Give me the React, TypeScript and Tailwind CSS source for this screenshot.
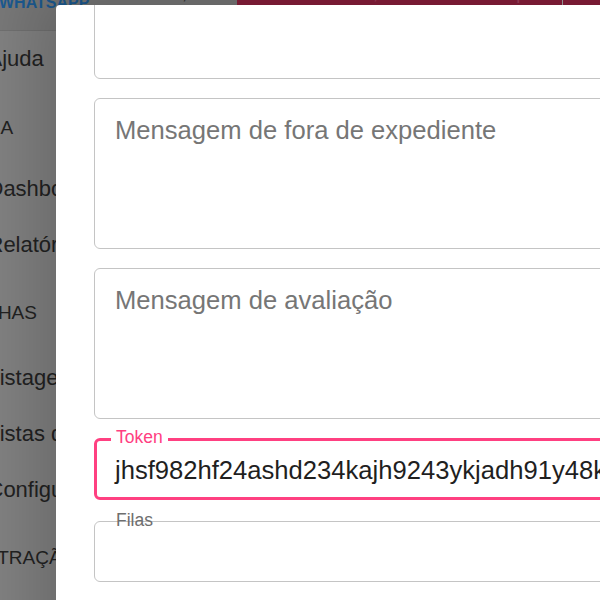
const menu: { kind: 'item' | 'head'; label: string; shift?: string }[] = [
  { kind: 'item', label: 'Ajuda' },
  { kind: 'head', label: 'GERÊNCIA', shift: 'ml-[-86px] h-[74px] pt-[8px]' },
  { kind: 'item', label: 'Dashboard' },
  { kind: 'item', label: 'Relatórios' },
  { kind: 'head', label: 'CAMPANHAS', shift: 'ml-[-82px] h-[77px] pt-[3px]' },
  { kind: 'item', label: 'Listagem' },
  { kind: 'item', label: 'Listas de Contatos' },
  { kind: 'item', label: 'Configurações' },
  { kind: 'head', label: 'ADMINISTRAÇÃO', shift: 'ml-[-82px] h-[77px] pt-[3px]' },
];

function Sidebar() {
  return (
    <div className="flex flex-col w-[56px] overflow-hidden whitespace-nowrap text-[#222]">
      {menu.map((m) =>
        m.kind === 'item' ? (
          <div key={m.label} className="h-[56px] flex items-center ml-[-12.5px] text-[22px] leading-[26px]">
            {m.label}
          </div>
        ) : (
          <div key={m.label} className={`${m.shift} flex items-center text-[19px] leading-[22px]`}>
            {m.label}
          </div>
        )
      )}
    </div>
  );
}

function TextArea({ placeholder }: { placeholder?: string }) {
  return (
    <div className="h-[151px] shrink-0 rounded-[6px] border border-[#c4c4c4] pl-[20px] pt-[16px] text-[25.6px] leading-[30px] text-[#767676]">
      {placeholder}
    </div>
  );
}

export default function App() {
  return (
    <div className="relative w-[600px] h-[600px] overflow-hidden bg-[#838383] font-['Liberation_Sans',Arial,sans-serif]">
      <div className="flex h-[31px] border-b border-[#727272] bg-[#7a7a7a]">
        <div className="w-[237px] flex items-start justify-between overflow-hidden">
          <span className="ml-[-1px] mt-[-5px] text-[16px] leading-[16px] font-bold text-[#1c5b92]">WHATSAPP</span>
          <span className="mr-[50px] mt-[-16px] text-[18px] leading-[18px] text-[#333]">,</span>
        </div>
        <div className="flex-1 flex bg-[#8c1f3c]">
          <span className="ml-[22px] mt-[-16px] text-[18px] leading-[18px] text-[#a64260] whitespace-nowrap">
            Olá Atendente, Bem-vindo a Empresa
          </span>
          <div className="ml-auto mr-[37px] w-px bg-[#a9a9a9]" />
        </div>
      </div>

      <Sidebar />

      <div className="absolute left-[56px] top-[5px] right-[-300px] bottom-[-200px] overflow-hidden rounded-[4px] bg-white shadow-[0_0_70px_24px_rgba(0,0,0,0.2)]">
        <div className="mt-[-77px] ml-[38px] flex flex-col gap-[19px]">
          <TextArea />
          <TextArea placeholder="Mensagem de fora de expediente" />
          <TextArea placeholder="Mensagem de avaliação" />

          <div className="relative h-[62px] shrink-0 rounded-[6px] border-[3px] border-[#ff4081] pl-[18px] pt-[14px] text-[25.6px] leading-[30px] text-[#1f1f1f] whitespace-nowrap">
            <span className="absolute left-[14px] top-[-14px] bg-white px-[5px] text-[17.5px] leading-[20px] text-[#ff4081]">Token</span>
            jhsf982hf24ashd234kajh9243ykjadh91y48k2h3jk4h
          </div>

          <div className="relative h-[61px] shrink-0 mt-[2px] rounded-[6px] border border-[#c4c4c4]">
            <span className="absolute left-[21px] top-[-12px] text-[17.5px] leading-[20px] text-[#6e6e6e]">Filas</span>
          </div>
        </div>
      </div>
    </div>
  );
}
